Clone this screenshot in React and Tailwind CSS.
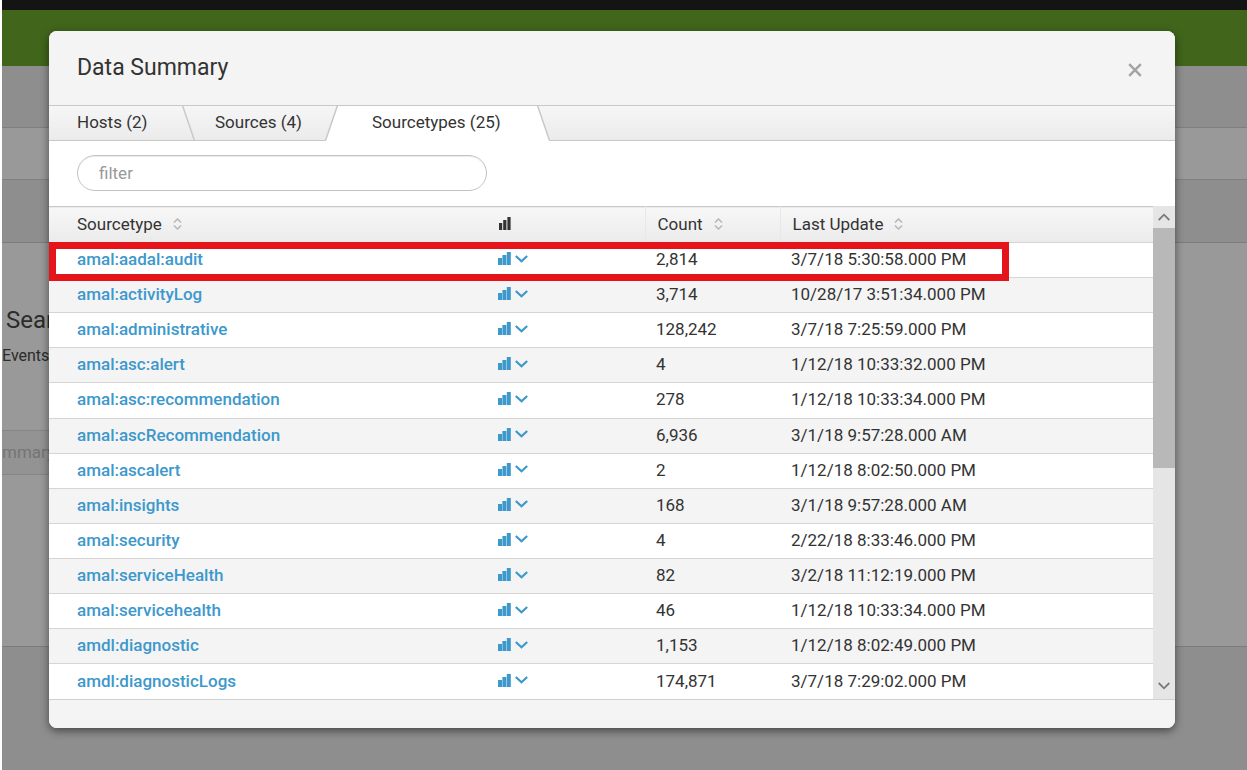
import React from "react";

const ROWS = [
  ["amal:aadal:audit", "2,814", "3/7/18 5:30:58.000 PM"],
  ["amal:activityLog", "3,714", "10/28/17 3:51:34.000 PM"],
  ["amal:administrative", "128,242", "3/7/18 7:25:59.000 PM"],
  ["amal:asc:alert", "4", "1/12/18 10:33:32.000 PM"],
  ["amal:asc:recommendation", "278", "1/12/18 10:33:34.000 PM"],
  ["amal:ascRecommendation", "6,936", "3/1/18 9:57:28.000 AM"],
  ["amal:ascalert", "2", "1/12/18 8:02:50.000 PM"],
  ["amal:insights", "168", "3/1/18 9:57:28.000 AM"],
  ["amal:security", "4", "2/22/18 8:33:46.000 PM"],
  ["amal:serviceHealth", "82", "3/2/18 11:12:19.000 PM"],
  ["amal:servicehealth", "46", "1/12/18 10:33:34.000 PM"],
  ["amdl:diagnostic", "1,153", "1/12/18 8:02:49.000 PM"],
  ["amdl:diagnosticLogs", "174,871", "3/7/18 7:29:02.000 PM"],
];

function BarsIcon() {
  return (
    <svg width="13" height="13" viewBox="0 0 13 13" fill="currentColor" aria-hidden="true">
      <path d="M0 6H4V13H0Z" />
      <path d="M4.4 3H8.4V13H4.4Z" />
      <path d="M8.8 0H12.8V13H8.8Z" />
    </svg>
  );
}

function HeaderBarsIcon() {
  return (
    <svg width="12" height="13" viewBox="0 0 12 13" fill="currentColor" aria-hidden="true">
      <rect x="0" y="6" width="3.2" height="7" />
      <rect x="4.2" y="3" width="3.2" height="10" />
      <rect x="8.4" y="0" width="3.2" height="13" />
    </svg>
  );
}

function Chevron() {
  return (
    <svg width="13" height="8" viewBox="0 0 13 8" fill="none" stroke="currentColor" strokeWidth="2.2" aria-hidden="true">
      <path d="M0.8 1L6.5 6.3L12.2 1" />
    </svg>
  );
}

function ScrollArrow({ up = false }) {
  return (
    <svg width="12" height="8" viewBox="0 0 12 8" fill="none" stroke="currentColor" strokeWidth="1.8" aria-hidden="true">
      <path d={up ? "M0.7 7L6 1.7L11.3 7" : "M0.7 1L6 6.3L11.3 1"} />
    </svg>
  );
}

function SortIcon() {
  return (
    <svg width="9" height="12" viewBox="0 0 9 12" fill="none" stroke="#b9b9b9" strokeWidth="1.6" aria-hidden="true">
      <path d="M1 4.5L4.5 1L8 4.5M1 7.5L4.5 11L8 7.5" />
    </svg>
  );
}

function SortHeader({ children }) {
  return (
    <button className="flex items-center gap-[11px]">
      {children}
      <SortIcon />
    </button>
  );
}

function TabEdge({ rising = false, left, right }) {
  return (
    <svg className="-my-px h-9 w-[13px] shrink-0" viewBox="0 0 13 36" aria-hidden="true">
      {left && <path d="M0 1H0.5L12.5 36H0Z" fill={left} />}
      {right && <path d="M13 1H12.5L0.5 36H13Z" fill={right} />}
      <path d={rising ? "M12.5 0.5L0.5 35.5" : "M0.5 0.5L12.5 35.5"} stroke="#c8c8c8" strokeWidth="1.5" fill="none" />
    </svg>
  );
}

function Backdrop() {
  return (
    <div className="flex min-h-screen flex-col pl-[2px]" aria-hidden="true">
      <div className="h-[10px] bg-[#141414]" />
      <div className="h-14 bg-[#40651b]" />
      <div className="h-[62px] border-b border-[#7f7f7f] bg-[#8e8e8e]" />
      <div className="h-[52px] border-b border-[#7f7f7f] bg-[#999999]" />
      <div className="h-[63px] border-b border-[#7c7c7c] bg-[#8e8e8e]" />
      <div className="h-[404px] border-b border-[#7c7c7c] bg-[#999999] pt-[61px] text-[#2b2b2b]">
        <div className="pl-1 text-2xl">Search</div>
        <div className="pt-2 text-base leading-6">Events</div>
        <div className="mt-[62px] h-[45px] w-[300px] border-y border-[#868686] bg-[#939393] text-[17px] leading-[43px] text-[#757575]">mmary</div>
      </div>
      <div className="grow bg-[#8e8e8e]" />
    </div>
  );
}

export default function App() {
  return (
    <div className="relative min-h-screen overflow-hidden bg-white font-['Roboto',sans-serif] text-[#333333]">
      <Backdrop />
      <div className="absolute inset-0 pt-[31px] pr-[72px] pl-[49px]">
        <div role="dialog" aria-labelledby="title" className="overflow-hidden rounded-lg bg-white shadow-[0_3px_8px_rgba(0,0,0,0.5)]">
          <header className="flex h-[74px] items-center justify-between bg-[#f4f4f4] pr-[33px] pl-7">
            <h1 id="title" className="text-[23px]">Data Summary</h1>
            <button aria-label="Close" className="pt-1 text-[#a3a3a3]">
              <svg width="14" height="14" viewBox="0 0 14 14" stroke="currentColor" strokeWidth="2.4" fill="none" aria-hidden="true">
                <path d="M1.2 1.2L12.8 12.8M12.8 1.2L1.2 12.8" />
              </svg>
            </button>
          </header>

          <div role="tablist" className="flex h-9 border-y border-[#c8c8c8] bg-linear-to-b from-[#f6f6f6] to-[#ebebeb] pl-7 text-[17px] leading-8">
            <button role="tab" aria-selected="false" className="flex w-[105px]">Hosts (2)</button>
            <TabEdge />
            <button role="tab" aria-selected="false" className="flex w-[130px] pl-5">Sources (4)</button>
            <TabEdge rising right="#ffffff" />
            <button role="tab" aria-selected="true" className="-mb-px flex w-[199px] bg-white pl-[34px]">Sourcetypes (25)</button>
            <TabEdge left="#ffffff" />
          </div>

          <div className="h-[65px] px-7 pt-[14px]">
            <input aria-label="Filter" placeholder="filter" className="h-9 w-[410px] rounded-full border border-[#c3c3c3] bg-white px-[21px] pb-px text-[17px] shadow-[inset_0_1px_1px_rgba(0,0,0,0.08)] outline-none placeholder:text-[#999999]" />
          </div>

          <div className="flex">
            <div className="relative grow">
              <table className="h-[493px] w-full table-fixed border-collapse text-left text-[17px] leading-6">
                <colgroup>
                  <col className="w-[437px]" />
                  <col className="w-[159px]" />
                  <col className="w-[135px]" />
                  <col />
                </colgroup>
                <thead>
                  <tr className="h-9 border-t border-[#c8c8c8] bg-linear-to-b from-[#f7f7f7] to-[#ebebeb]">
                    <th className="p-0 pb-[2px] pl-7 font-normal"><SortHeader>Sourcetype</SortHeader></th>
                    <th className="border-r border-[#e8e8e8] p-0 pb-[2px] pl-[13px] font-normal" aria-label="Activity"><HeaderBarsIcon /></th>
                    <th className="border-r border-[#e8e8e8] p-0 pb-[2px] pl-3 font-normal"><SortHeader>Count</SortHeader></th>
                    <th className="p-0 pb-[2px] pl-3 font-normal"><SortHeader>Last Update</SortHeader></th>
                  </tr>
                </thead>
                <tbody>
                  {ROWS.map(([name, count, updated]) => (
                    <tr key={name} className="h-[35px] border-t border-[#d5d5d5] odd:bg-white even:bg-[#f4f4f4]">
                      <td className="p-0 pb-[2px] pl-7"><a href="#" className="font-medium text-[#3d98cc]">{name}</a></td>
                      <td className="p-0 pb-[3px] pl-3">
                        <button aria-label={`Open ${name}`} className="flex items-center gap-1 text-[#3d98cc]">
                          <BarsIcon />
                          <Chevron />
                        </button>
                      </td>
                      <td className="p-0 pb-[2px] pl-[11px]">{count}</td>
                      <td className="p-0 pb-[2px] pl-[11px]">{updated}</td>
                    </tr>
                  ))}
                </tbody>
              </table>
              <div className="pointer-events-none absolute top-9 left-0 h-[39px] w-[960px] border-[7px] border-[#e5141b]" />
            </div>
            <div className="flex w-[22px] shrink-0 flex-col items-center bg-[#e5e5e5] text-[#7a7a7a]">
              <div className="flex h-[22px] items-center"><ScrollArrow up /></div>
              <div className="h-60 w-full bg-[#b8b8b8]" />
              <div className="mt-auto flex h-[26px] items-center"><ScrollArrow /></div>
            </div>
          </div>

          <footer className="h-[29px] border-t border-[#d0d0d0] bg-[#f4f4f4]" />
        </div>
      </div>
    </div>
  );
}
